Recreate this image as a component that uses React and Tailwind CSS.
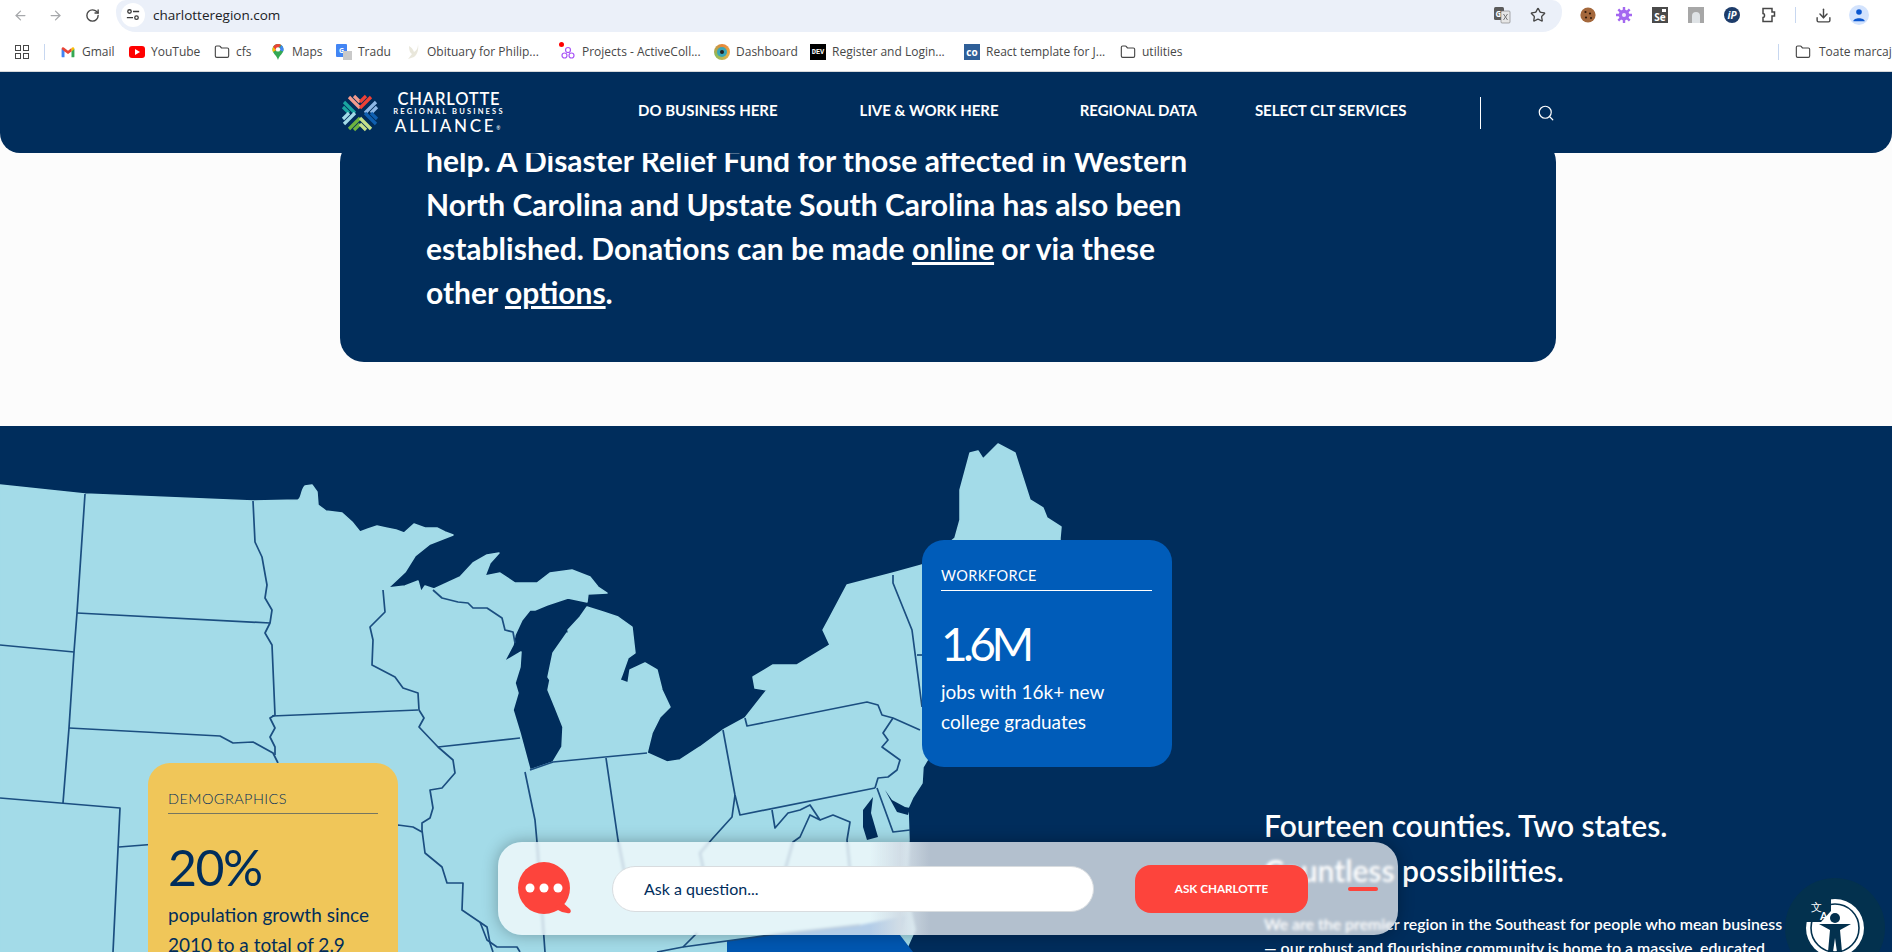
import { ArrowLeft, ArrowRight, RotateCw, Star, Download, Folder, Search } from "lucide-react";

const LAND =
  "M0,485 L85,494 L253,501 L298,500 C302,498 301,490 305,486 L312,485 L317,492 L318,505 L326,511 L342,513 L352,522 L360,532 L368,529 L377,526 L386,528 L396,530 L404,533 L414,524 L425,528 L437,528 L445,532 L453,535 L430,544 L415,556 L405,572 L388,588 L405,586 L418,581 L421,592 L425,586 L434,589 L460,577 L473,563 L487,555 L499,553 L490,563 L485,576 L500,573 L515,583 L537,583 L550,573 L572,570 L590,577 L598,587 L607,593 L588,594 L587,602 L568,598 L547,605 L535,610 L530,610 L522,620 L515,635 L513,645 L504,662 L521,652 L520,667 L515,683 L518,693 L513,710 L520,733 L530,770 L553,762 L562,747 L563,727 L555,707 L548,690 L550,680 L548,677 L553,653 L567,633 L570,643 L568,630 L580,617 L587,607 L603,612 L618,617 L632,627 L635,653 L628,658 L622,675 L620,680 L628,683 L630,670 L645,663 L657,670 L662,690 L670,707 L660,717 L652,733 L647,753 L667,762 L680,760 L700,747 L723,730 L745,718 L767,690 L755,688 L753,677 L773,665 L797,665 L830,645 L823,630 L830,617 L847,585 L893,573 L922,565 L955,538 L960,520 L960,490 L970,453 L978,451 L983,459 L998,444 L1015,453 L1030,500 L1043,508 L1047,518 L1061,527 L1060,538 L1060,560 L1000,640 L923,767 L922,783 L913,797 L908,808 L909,840 L906,890 L915,930 L905,952 L0,952 Z";

// state borders, page coordinates
const BORDERS = [
  "M85,494 L77,613 L74,652 L69,728 L63,803",
  "M77,613 L270,623",
  "M0,645 L74,652",
  "M69,728 L220,736 L233,743 L253,742 L273,753 L278,763",
  "M253,501 L255,542 L262,557 L267,585 L265,598 L272,610 L270,623 L265,633 L272,645 L275,715 L270,718 L275,728 L270,737 L275,747 L275,755",
  "M272,716 L418,710",
  "M383,590 L385,612 L370,627 L373,640 L372,665 L395,677 L403,688 L418,693 L419,710 L424,718 L419,727 L438,747 L453,760 L455,773 L442,788 L430,790 L433,808 L430,818 L422,823 L422,830 L425,853 L442,867 L447,883 L463,883 L462,910 L487,927 L490,943 L493,952",
  "M438,747 L520,738",
  "M433,590 L442,598 L458,602 L468,603 L473,608 L487,608 L502,618 L505,630 L513,632 L515,643",
  "M119,847 L398,825 L413,827 L422,832",
  "M0,798 L120,808 L113,952",
  "M525,772 L535,820 L537,842 L545,952",
  "M530,770 L553,762 L605,757 L647,753",
  "M606,758 L618,840 L630,900",
  "M723,730 L735,795 L740,815 L875,788",
  "M745,718 L747,726 L867,702 L878,705 L882,715 L893,718 L920,730",
  "M893,718 L883,733 L888,740 L882,747 L900,760 L897,770 L888,777 L878,778 L875,788",
  "M877,788 L893,832 L910,830",
  "M772,810 L775,828 L788,813 L800,810 L810,805 L820,820 L810,815 L800,837 L793,842 L785,870",
  "M820,820 L833,815 L850,822 L847,840 L850,870",
  "M735,795 L732,817 L713,838 L700,853 L703,867 L697,873 L680,900",
  "M893,575 L893,583 L912,630 L922,707",
  "M917,655 L922,655",
  "M657,952 L683,947 L770,935 L860,925",
  "M683,947 L697,933",
  "M480,922 L487,940 L497,947 L517,947 L520,952",
];

function MapDrawing() {
  return (
    <svg className="absolute inset-0 h-full w-full" viewBox="0 426 1892 526">
      <path d={LAND} fill="#a3dbe8" stroke="#a3dbe8" strokeWidth="1.5" strokeLinejoin="round" />
      <path d="M727,941 L770,935 L860,925 L905,916 L900,935 L913,952 L727,952 Z" fill="#0057b1" />
      <path d="M863,810 L873,797 L871,813 L878,837 L867,840 L863,827 Z" fill="#002d5c" />
      <path d="M885,790 L892,800 L905,807 L910,808 L908,815 L897,812 Z" fill="#002d5c" />
      <g fill="none" stroke="#1b4e80" strokeWidth="1.7" strokeLinejoin="round">
        {BORDERS.map((d) => (
          <path key={d} d={d} />
        ))}
      </g>
    </svg>
  );
}

function LogoMark() {
  const arms = [
    ["M20,15 L9,4 M20,9 L14,3", "#f29b8e"],
    ["M20,15 L31,4 M20,9 L26,3", "#ef4136"],
    ["M25,20 L36,9 M31,20 L37,14", "#8db8e6"],
    ["M25,20 L36,31 M31,20 L37,26", "#0f5fb0"],
    ["M20,25 L9,36 M20,31 L14,37", "#6cb33f"],
    ["M20,25 L31,36 M20,31 L26,37", "#c6e08b"],
    ["M15,20 L4,9 M9,20 L3,14", "#1aa5a0"],
    ["M15,20 L4,31 M9,20 L3,26", "#a3dbe8"],
  ];
  return (
    <svg className="h-10 w-10 shrink-0" viewBox="0 0 40 40" fill="none" strokeWidth="3.2">
      {arms.map(([d, color]) => (
        <path key={d} d={d} stroke={color} />
      ))}
    </svg>
  );
}

function Logo() {
  return (
    <div className="flex items-center text-white">
      <LogoMark />
      <div className="ml-[6px] flex w-[126px] flex-col items-center leading-none">
        <span className="text-[16.5px] font-semibold leading-[16px] tracking-[0.05em]">CHARLOTTE</span>
        <span className="text-[7.5px] font-bold leading-[10px] tracking-[0.29em]">REGIONAL BUSINESS</span>
        <span className="text-[17px] font-medium leading-[17px] tracking-[0.16em]">
          ALLIANCE<sup className="text-[5px]">®</sup>
        </span>
      </div>
    </div>
  );
}

function TopIcon({ children }) {
  return <div className="flex h-[30px] w-9 shrink-0 items-center justify-center">{children}</div>;
}

function BrowserTop() {
  return (
    <div className="flex h-8 bg-white pl-[2px]">
      <div className="flex w-[114px] items-center pb-[2px]">
        <div className="flex w-9 justify-center">
          <ArrowLeft className="h-[15px] w-[15px] text-[#a6a8ab]" strokeWidth={2} />
        </div>
        <div className="flex w-[34px] justify-center">
          <ArrowRight className="h-[15px] w-[15px] text-[#a6a8ab]" strokeWidth={2} />
        </div>
        <div className="flex w-[40px] justify-center">
          <RotateCw className="h-[15px] w-[15px] text-[#474747]" strokeWidth={2.2} />
        </div>
      </div>
      <div className="flex w-[1446px] items-center rounded-t-[10px] rounded-b-[20px] bg-[#ebf0f9] pb-[2px] pl-[5px]">
        <div className="flex h-6 w-6 items-center justify-center rounded-full bg-white">
          <svg className="h-[14px] w-[14px]" viewBox="0 0 16 16" fill="none" stroke="#3c3c3c" strokeWidth="1.5">
            <circle cx="4" cy="4" r="2" />
            <path d="M8 4 H15 M1 11 H8" />
            <circle cx="12" cy="11" r="2" />
          </svg>
        </div>
        <span className="ml-2 text-[13.5px] text-[#202124]">charlotteregion.com</span>
        <div className="ml-auto flex items-center pr-[6px]">
          <TopIcon>
            <svg className="h-[18px] w-[18px]" viewBox="0 0 18 18">
              <rect x="1" y="1" width="10" height="13" rx="1.5" fill="#5b5b5b" />
              <text x="2.5" y="11" fontSize="8" fontWeight="700" fill="#fff">
                G
              </text>
              <rect x="8" y="5" width="9" height="12" rx="1" fill="#e6e6e6" stroke="#777" strokeWidth="0.6" />
              <path d="M10.5 8 L14.5 14 M14.5 8 L10.5 14" stroke="#777" strokeWidth="1" />
            </svg>
          </TopIcon>
          <TopIcon>
            <Star className="h-4 w-4 text-[#474747]" strokeWidth={2} />
          </TopIcon>
        </div>
      </div>
      <div className="flex items-center pb-[2px] pl-[8px]">
        <TopIcon>
          <svg className="h-4 w-4" viewBox="0 0 16 16">
            <circle cx="8" cy="8" r="7.6" fill="#a4683c" />
            <circle cx="5.5" cy="5" r="1.1" fill="#2f1a0c" />
            <circle cx="10" cy="6.5" r="1.1" fill="#2f1a0c" />
            <circle cx="6" cy="10.5" r="1.1" fill="#2f1a0c" />
            <circle cx="11" cy="11" r="1" fill="#2f1a0c" />
          </svg>
        </TopIcon>
        <TopIcon>
          <svg className="h-4 w-4" viewBox="0 0 16 16">
            <g stroke="#a468f0" strokeWidth="2.4">
              <path d="M8 0 V16 M0 8 H16 M2.3 2.3 L13.7 13.7 M13.7 2.3 L2.3 13.7" />
            </g>
            <circle cx="8" cy="8" r="5.4" fill="#a468f0" />
            <circle cx="8" cy="8" r="2" fill="#f1e6ff" />
          </svg>
        </TopIcon>
        <TopIcon>
          <div className="relative flex h-4 w-4 items-end justify-center bg-[#4a4a4a] text-[10px] font-bold leading-[11px] text-white">
            Se
            <span className="absolute right-[2px] top-[2px] h-[3px] w-[4px] bg-white" />
          </div>
        </TopIcon>
        <TopIcon>
          <div className="flex h-4 w-4 items-end justify-center bg-[#a7a7a7]">
            <div className="h-[11px] w-[8px] rounded-t-full bg-[#dfe3e6]" />
          </div>
        </TopIcon>
        <TopIcon>
          <div className="flex h-4 w-4 items-center justify-center rounded-full bg-[#1d3c6a] text-[10px] font-bold italic leading-none text-white">
            iP
          </div>
        </TopIcon>
        <TopIcon>
          <svg className="h-4 w-4" viewBox="0 0 16 16" fill="none" stroke="#474747" strokeWidth="1.5">
            <path d="M3 1.5 H12 V5 H14.5 V9 H12 V14.5 H3 V10.5 C5 10.5 5 6.5 3 6.5 Z" />
          </svg>
        </TopIcon>
        <div className="ml-[9px] h-4 w-px bg-[#c7d7f0]" />
        <div className="ml-[9px] flex items-center">
          <TopIcon>
            <Download className="h-[17px] w-[17px] text-[#474747]" strokeWidth={2} />
          </TopIcon>
          <TopIcon>
            <div className="flex h-5 w-5 items-center justify-center rounded-full bg-[#d3e3fd]">
              <svg className="h-[14px] w-[14px]" viewBox="0 0 16 16" fill="#0b57d0">
                <circle cx="8" cy="4.5" r="3.2" />
                <path d="M1.5 15 C1.5 10.5 14.5 10.5 14.5 15 Z" />
              </svg>
            </div>
          </TopIcon>
        </div>
      </div>
    </div>
  );
}

function GmailIcon() {
  return (
    <svg className="h-[14px] w-[14px]" viewBox="0 0 24 24">
      <path d="M1 7 H6 V21 H2.5 C1.6 21 1 20.4 1 19.5 Z" fill="#4285f4" />
      <path d="M18 7 H23 V19.5 C23 20.4 22.4 21 21.5 21 H18 Z" fill="#34a853" />
      <path d="M1 7 C1 4 4 3 6 5 L12 10 L18 5 L18 11 L12 15.5 L6 11 L1 7 Z" fill="#ea4335" />
      <path d="M18 5 C20 3 23 4 23 7 L18 11 Z" fill="#fbbc04" />
    </svg>
  );
}

const BookmarkIcons = {
  gmail: <GmailIcon />,
  youtube: (
    <div className="flex h-[12px] w-4 items-center justify-center rounded-[3px] bg-[#f00]">
      <div className="h-0 w-0 border-y-[3px] border-l-[5px] border-y-transparent border-l-white" />
    </div>
  ),
  folder: <Folder className="h-4 w-4 text-[#474747]" strokeWidth={1.7} />,
  maps: (
    <svg className="h-4 w-4" viewBox="0 0 16 16">
      <path d="M8 0 C4.5 0 2.5 2.6 2.5 5.5 C2.5 9.5 6.5 11 8 16 C9.5 11 13.5 9.5 13.5 5.5 C13.5 2.6 11.5 0 8 0 Z" fill="#34a853" />
      <path d="M3.2 3 C4 1.2 6 0 8 0 C9.2 0 10.4 0.4 11.2 1 L5 7 Z" fill="#ea4335" />
      <path d="M11.2 1 C12.8 2 13.5 3.8 13.5 5.5 C13.5 6.3 13.3 7 13 7.6 L9.5 6 Z" fill="#4285f4" />
      <path d="M3.2 3 C2.7 3.8 2.5 4.6 2.5 5.5 C2.5 6.4 2.7 7.2 3 8 L6 6 Z" fill="#fbbc04" />
      <circle cx="8" cy="5.4" r="2.2" fill="#fff" />
    </svg>
  ),
  translate: (
    <div className="relative h-4 w-4">
      <div className="absolute left-0 top-0 flex h-[13px] w-[11px] items-center justify-center rounded-[1px] bg-[#4285f4] text-[7px] font-bold leading-none text-white">
        G
      </div>
      <div className="absolute bottom-0 right-0 h-[9px] w-[9px] bg-[#c9c9c9]" />
    </div>
  ),
  dove: (
    <svg className="h-4 w-4" viewBox="0 0 16 16" fill="#e9e7db">
      <path d="M13 0 C13 5 11 7 9 8 C8 5 6 3 4 2 C4 6 5 9 7 10 L3 15 L9 13 C12 11 14 6 13 0 Z" />
    </svg>
  ),
  projects: (
    <div className="relative h-4 w-4">
      <svg className="h-4 w-4" viewBox="0 0 16 16" fill="none" stroke="#a855f7" strokeWidth="1.2">
        <circle cx="8" cy="6" r="2.5" />
        <circle cx="4.5" cy="11.5" r="2.5" />
        <circle cx="11.5" cy="11.5" r="2.5" />
      </svg>
      <div className="absolute -left-[1px] -top-[2px] h-[5px] w-[5px] rounded-full bg-[#f00]" />
    </div>
  ),
  dashboard: (
    <div className="flex h-4 w-4 items-center justify-center rounded-full bg-[conic-gradient(#e8873a,#e8b04a,#8fbc5a,#e8873a)]">
      <div className="flex h-[10px] w-[10px] items-center justify-center rounded-full bg-[#3aa6b8]">
        <div className="h-1 w-1 rounded-full bg-[#222]" />
      </div>
    </div>
  ),
  dev: (
    <div className="flex h-4 w-4 items-center justify-center bg-black text-[7px] font-bold leading-none text-white [font-family:'Liberation_Mono',monospace]">
      DEV
    </div>
  ),
  co: (
    <div className="flex h-4 w-4 items-center justify-center bg-[#2f5f98] text-[10px] font-bold leading-none text-white">
      co
    </div>
  ),
};

const BOOKMARKS = [
  { icon: "gmail", label: "Gmail", width: "w-[69px]" },
  { icon: "youtube", label: "YouTube", width: "w-[85px]" },
  { icon: "folder", label: "cfs", width: "w-[56px]" },
  { icon: "maps", label: "Maps", width: "w-[66px]" },
  { icon: "translate", label: "Tradu", width: "w-[69px]" },
  { icon: "dove", label: "Obituary for Philip...", width: "w-[155px]" },
  { icon: "projects", label: "Projects - ActiveColl...", width: "w-[154px]" },
  { icon: "dashboard", label: "Dashboard", width: "w-[96px]" },
  { icon: "dev", label: "Register and Login...", width: "w-[154px]" },
  { icon: "co", label: "React template for J...", width: "w-[156px]" },
  { icon: "folder", label: "utilities", width: "w-[80px]" },
];

function BookmarksBar() {
  return (
    <div className="flex h-[40px] items-center overflow-hidden border-b border-[#d6d8da] bg-white pt-px text-[12px] text-[#474747] whitespace-nowrap">
      <div className="ml-[15px] grid h-[14px] w-[14px] shrink-0 grid-cols-2 gap-[2px]">
        <div className="border-[1.5px] border-[#474747]" />
        <div className="border-[1.5px] border-[#474747]" />
        <div className="border-[1.5px] border-[#474747]" />
        <div className="border-[1.5px] border-[#474747]" />
      </div>
      <div className="ml-[15px] mr-[15px] h-4 w-px shrink-0 bg-[#c7d7f0]" />
      {BOOKMARKS.map((b) => (
        <div key={b.label} className={`flex shrink-0 items-center gap-[6px] ${b.width}`}>
          <div className="flex h-4 w-4 items-center justify-center">{BookmarkIcons[b.icon]}</div>
          <span>{b.label}</span>
        </div>
      ))}
      <div className="ml-[578px] h-4 w-px shrink-0 bg-[#c7d7f0]" />
      <div className="ml-[16px] flex shrink-0 items-center gap-2">
        <Folder className="h-4 w-4 text-[#474747]" strokeWidth={1.7} />
        <span>Toate marcaje</span>
      </div>
    </div>
  );
}

function NavBar() {
  return (
    <nav className="relative z-10 flex h-[81px] items-center rounded-b-[20px] bg-[#002d5c] pl-[340px] text-white">
      <Logo />
      <a className="mb-[5px] ml-[126px] text-[15px] font-bold">DO BUSINESS HERE</a>
      <a className="mb-[5px] ml-[82px] text-[15px] font-bold">LIVE & WORK HERE</a>
      <a className="mb-[5px] ml-[81px] text-[15px] font-bold">REGIONAL DATA</a>
      <a className="mb-[5px] ml-[58px] text-[15px] font-bold">SELECT CLT SERVICES</a>
      <div className="ml-[74px] h-8 w-px bg-white" />
      <Search className="ml-[56px] h-[18px] w-[18px]" strokeWidth={1.6} />
    </nav>
  );
}

function DisasterCard() {
  return (
    <div className="relative -mt-[15px] ml-[340px] w-[1216px] rounded-[24px] bg-[#002d5c] pb-[48px] pl-[86px] text-[30px] font-bold leading-[44px] text-white">
      help. A Disaster Relief Fund for those affected in Western
      <br />
      North Carolina and Upstate South Carolina has also been
      <br />
      established. Donations can be made <a className="underline">online</a> or via these
      <br />
      other <a className="underline">options</a>.
    </div>
  );
}

function StatCard({ label, number, lines, className, ruleClass, numberClass, labelClass }) {
  return (
    <div className={`absolute w-[250px] rounded-[22px] pr-5 pt-[26px] ${className}`}>
      <div className={`text-[14.5px] leading-5 tracking-[0.03em] ${labelClass}`}>{label}</div>
      <div className={`mt-[4px] h-px ${ruleClass}`} />
      <div className={`mt-[27px] leading-[52px] ${numberClass}`}>{number}</div>
      <div className="mt-[7px] text-[19px] leading-[30px] whitespace-nowrap">
        {lines.map((line) => (
          <div key={line}>{line}</div>
        ))}
      </div>
    </div>
  );
}

function MapSection() {
  return (
    <section className="relative mt-[64px] h-[526px] overflow-hidden bg-[#002d5c]">
      <MapDrawing />
      <StatCard
        className="left-[922px] top-[114px] h-[227px] bg-[#005cb9] pl-[19px] text-white"
        ruleClass="bg-white"
        labelClass="font-normal"
        numberClass="text-[46px] tracking-[-0.1em]"
        label="WORKFORCE"
        number="1.6M"
        lines={["jobs with 16k+ new", "college graduates"]}
      />
      <StatCard
        className="left-[148px] top-[337px] h-[260px] bg-[#f0c659] pl-5 text-[#002d5c]"
        ruleClass="bg-[#757560]"
        labelClass="font-light"
        numberClass="text-[50px] tracking-[-0.03em]"
        label="DEMOGRAPHICS"
        number="20%"
        lines={["population growth since", "2010 to a total of 2.9"]}
      />
      <div className="relative ml-[1264px] pt-[377px] text-white">
        <h2 className="text-[30px] font-semibold leading-[45px]">
          Fourteen counties. Two states.
          <br />
          Countless possibilities.
        </h2>
        <p className="mt-[19px] text-[15.9px] font-semibold leading-[24px] whitespace-nowrap">
          We are the premier region in the Southeast for people who mean business
          <br />— our robust and flourishing community is home to a massive, educated
        </p>
      </div>
    </section>
  );
}

function ChatBar() {
  return (
    <div className="absolute bottom-[17px] left-[498px] z-20 flex h-[93px] w-[900px] items-center rounded-[24px] bg-white/70 shadow-[0_0_16px_rgba(0,0,0,0.3)] backdrop-blur-[1.5px]">
      {/* softens the coast edge seen through the glass */}
      <div className="absolute inset-y-0 left-[372px] w-[60px] bg-[linear-gradient(90deg,transparent,#d1dde6,transparent)]" />
      <svg className="relative ml-5 h-[54px] w-[54px] shrink-0" viewBox="0 0 54 54" fill="#fd443c">
        <circle cx="26" cy="26" r="26" />
        <path d="M36,46 L44,40 L52,47 C54,50 52,52 49,51 L44,50 Z" />
        <circle cx="12" cy="26" r="4.5" fill="#fff" />
        <circle cx="26" cy="26" r="4.5" fill="#fff" />
        <circle cx="40" cy="26" r="4.5" fill="#fff" />
      </svg>
      <div className="relative ml-[40px] flex h-[46px] w-[482px] items-center rounded-full border border-[#d8dcdf] bg-white pl-[31px] text-[16px] text-[#002d5c]">
        Ask a question...
      </div>
      <button className="relative ml-[41px] h-12 w-[173px] rounded-[16px] bg-[#fd443c] text-[11.7px] font-bold text-white">
        ASK CHARLOTTE
      </button>
      <div className="relative ml-[40px] h-1 w-[30px] rounded-full bg-[#fd443c]" />
    </div>
  );
}

function AccessibilityButton() {
  return (
    <div className="absolute left-[1785px] top-[878px] z-20 flex h-[100px] w-[100px] items-center justify-center rounded-full bg-[#03314e]">
      <svg className="h-[60px] w-[60px]" viewBox="0 0 60 60">
        <circle cx="30" cy="30" r="29" fill="#fff" />
        <circle cx="30" cy="30" r="24" fill="none" stroke="#03314e" strokeWidth="1.6" />
        <path d="M0 0 H26 V13 L16 24 H0 Z" fill="#03314e" />
        <circle cx="30" cy="20" r="5" fill="#03314e" />
        <path d="M14 26 L46 26 L35 32 L37 54 L32 54 L30 40 L28 54 L23 54 L25 32 Z" fill="#03314e" />
        <text x="6" y="13" fontSize="11" fill="#fff">
          文
        </text>
        <text x="15" y="22" fontSize="11" fontWeight="700" fill="#fff">
          A
        </text>
      </svg>
    </div>
  );
}

export default function App() {
  return (
    <div className="relative h-[952px] overflow-hidden bg-[#fcfcfc] [font-family:Lato,sans-serif]">
      <div className="[font-family:'Open_Sans',sans-serif]">
        <BrowserTop />
        <BookmarksBar />
      </div>
      <NavBar />
      <DisasterCard />
      <MapSection />
      <ChatBar />
      <AccessibilityButton />
    </div>
  );
}
